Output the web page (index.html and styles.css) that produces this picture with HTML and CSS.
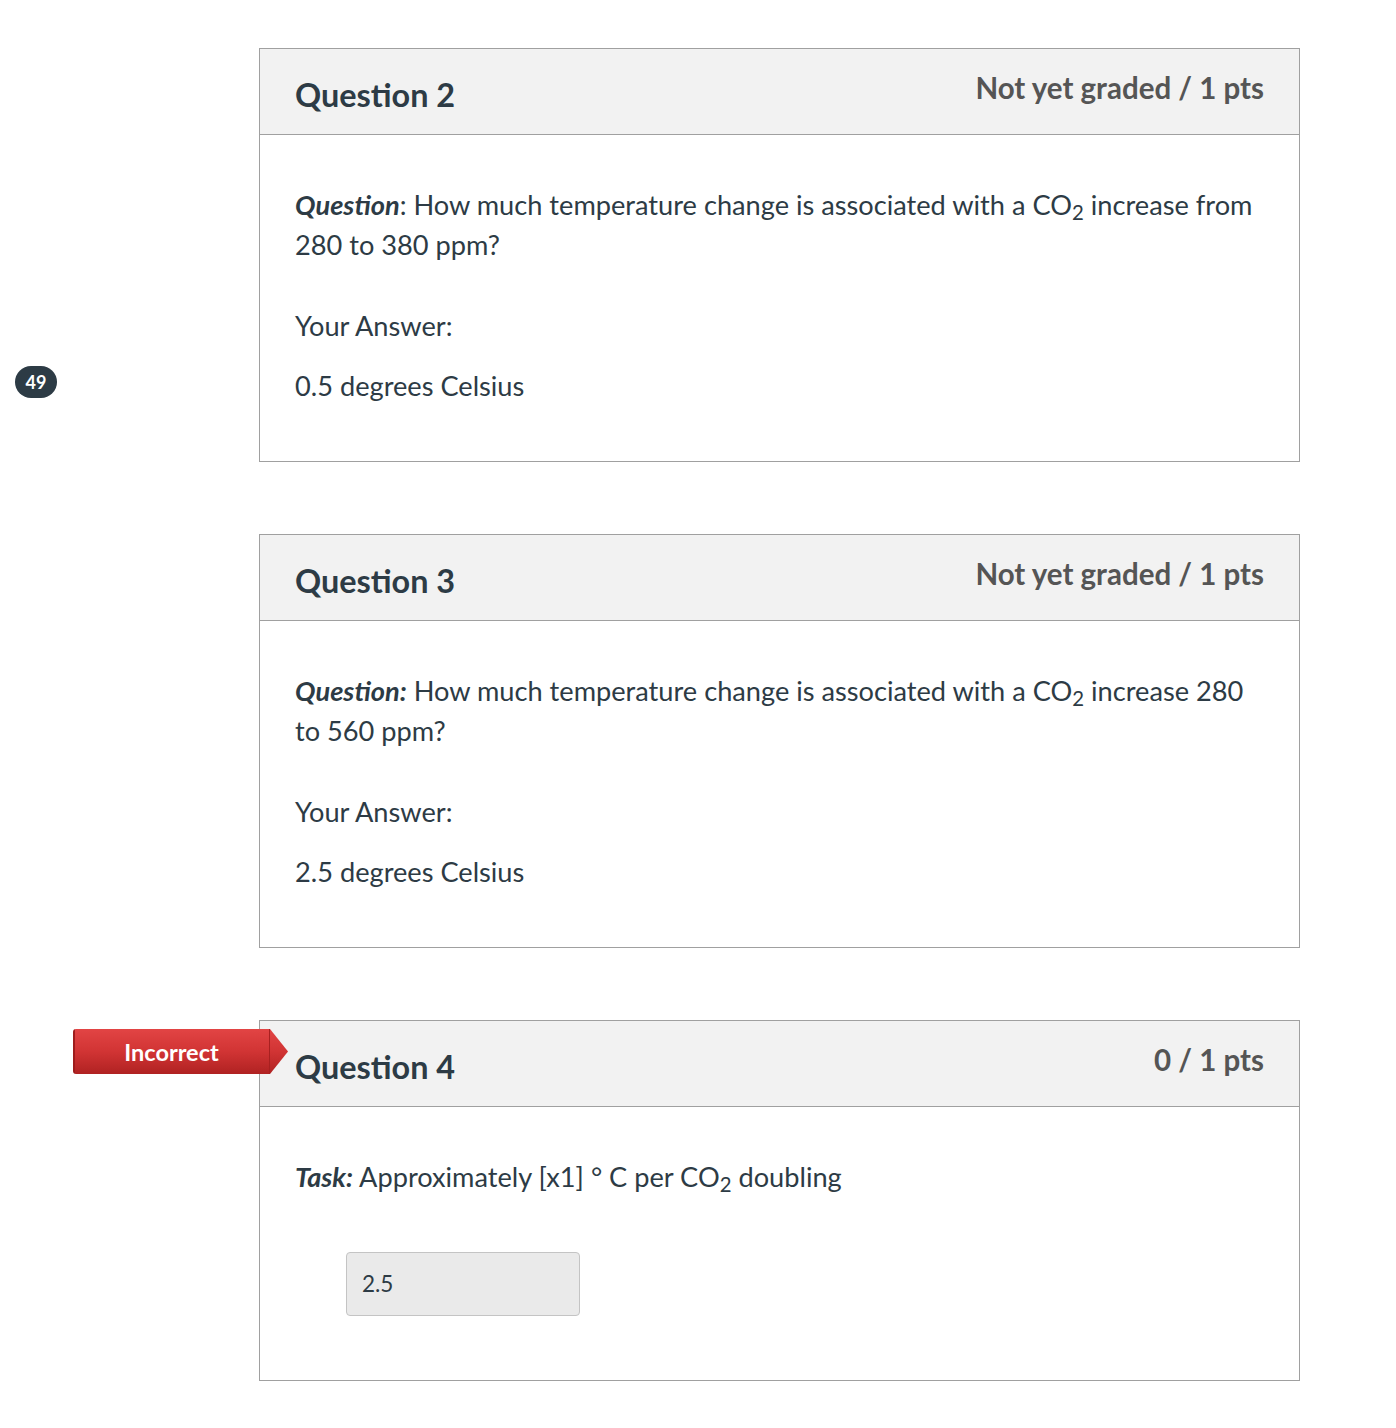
FILE: index.html
```html
<!DOCTYPE html>
<html>
<head>
<meta charset="utf-8">
<link rel="stylesheet" href="styles.css">
</head>
<body>
<div class="page">
  <div class="page-marker">49</div>

  <div class="question">
    <div class="q-header">
      <div class="q-name">Question 2</div>
      <div class="q-points">Not yet graded / 1 pts</div>
    </div>
    <div class="q-body">
      <p class="q-text"><b><i>Question</i></b>: How much temperature change is associated with a CO<sub>2</sub> increase from 280 to 380 ppm?</p>
      <p class="q-label">Your Answer:</p>
      <p class="q-answer">0.5 degrees Celsius</p>
    </div>
  </div>

  <div class="question">
    <div class="q-header">
      <div class="q-name">Question 3</div>
      <div class="q-points">Not yet graded / 1 pts</div>
    </div>
    <div class="q-body">
      <p class="q-text"><b><i>Question:</i></b> How much temperature change is associated with a CO<sub>2</sub> increase 280 to 560 ppm?</p>
      <p class="q-label">Your Answer:</p>
      <p class="q-answer">2.5 degrees Celsius</p>
    </div>
  </div>

  <div class="question">
    <div class="flag-incorrect">Incorrect</div>
    <div class="q-header">
      <div class="q-name">Question 4</div>
      <div class="q-points">0 / 1 pts</div>
    </div>
    <div class="q-body q-body-task">
      <p class="q-text"><b><i>Task:</i></b> Approximately [x1] ° C per CO<sub>2</sub> doubling</p>
      <div class="answer-box">2.5</div>
    </div>
  </div>
</div>
</body>
</html>
```

FILE: styles.css
```css
html, body {
  margin: 0;
  padding: 0;
  background: #ffffff;
}

body {
  font-family: Lato, "Open Sans", "Liberation Sans", sans-serif;
  color: #2d3b45;
}

.page {
  position: relative;
  padding: 48px 0 40px 259px;
  display: flex;
  flex-direction: column;
  gap: 72px;
}

.page-marker {
  position: absolute;
  left: 15px;
  top: 366px;
  width: 42px;
  height: 32px;
  border-radius: 16px;
  background: #2d3b45;
  color: #ffffff;
  font-size: 18px;
  font-weight: 700;
  display: flex;
  align-items: center;
  justify-content: center;
}

.question {
  position: relative;
  width: 1041px;
  box-sizing: border-box;
  border: 1px solid #a0a0a0;
  background: #ffffff;
}

.q-header {
  height: 85px;
  background: #f2f2f2;
  border-bottom: 1px solid #a0a0a0;
  padding: 0 35px;
  display: flex;
  justify-content: space-between;
  align-items: flex-start;
}

.q-name {
  margin-top: 27px;
  font-size: 32.4px;
  font-weight: 700;
  line-height: 38px;
  color: #2d3b45;
}

.q-points {
  margin-top: 21px;
  font-size: 29.5px;
  font-weight: 700;
  line-height: 36px;
  color: #555555;
}

.q-body {
  padding: 50px 35px 55px 35px;
  font-size: 27.2px;
  line-height: 40px;
}

.q-body p {
  margin: 0;
}

.q-text {
  margin: 0;
}

.q-label {
  margin-top: 41px !important;
}

.q-answer {
  margin-top: 20px !important;
}

sub {
  font-size: 0.75em;
  line-height: 0;
  vertical-align: -0.25em;
}

.q-body-task {
  padding-bottom: 64px;
}

.answer-box {
  margin: 55px 0 0 51px;
  width: 234px;
  height: 64px;
  box-sizing: border-box;
  background: #eaeaea;
  border: 1px solid #c4c4c4;
  border-radius: 4px;
  padding-left: 15px;
  display: flex;
  align-items: center;
  font-size: 22.5px;
  color: #2d3b45;
}

.flag-incorrect {
  position: absolute;
  left: -187px;
  top: 8px;
  width: 215px;
  height: 45px;
  box-sizing: border-box;
  padding-right: 18px;
  background:
    linear-gradient(to right, #9e1c1c 0, #9e1c1c 2px, transparent 2px, transparent 196px, #a82020 196px, #a82020 197px, transparent 197px),
    linear-gradient(to bottom, #e24444 0%, #d13434 50%, #b02222 100%);
  clip-path: polygon(0 0, 197px 0, 100% 50%, 197px 100%, 0 100%);
  border-radius: 3px 0 0 3px;
  color: #ffffff;
  font-size: 23.5px;
  font-weight: 700;
  display: flex;
  align-items: center;
  justify-content: center;
}
```
